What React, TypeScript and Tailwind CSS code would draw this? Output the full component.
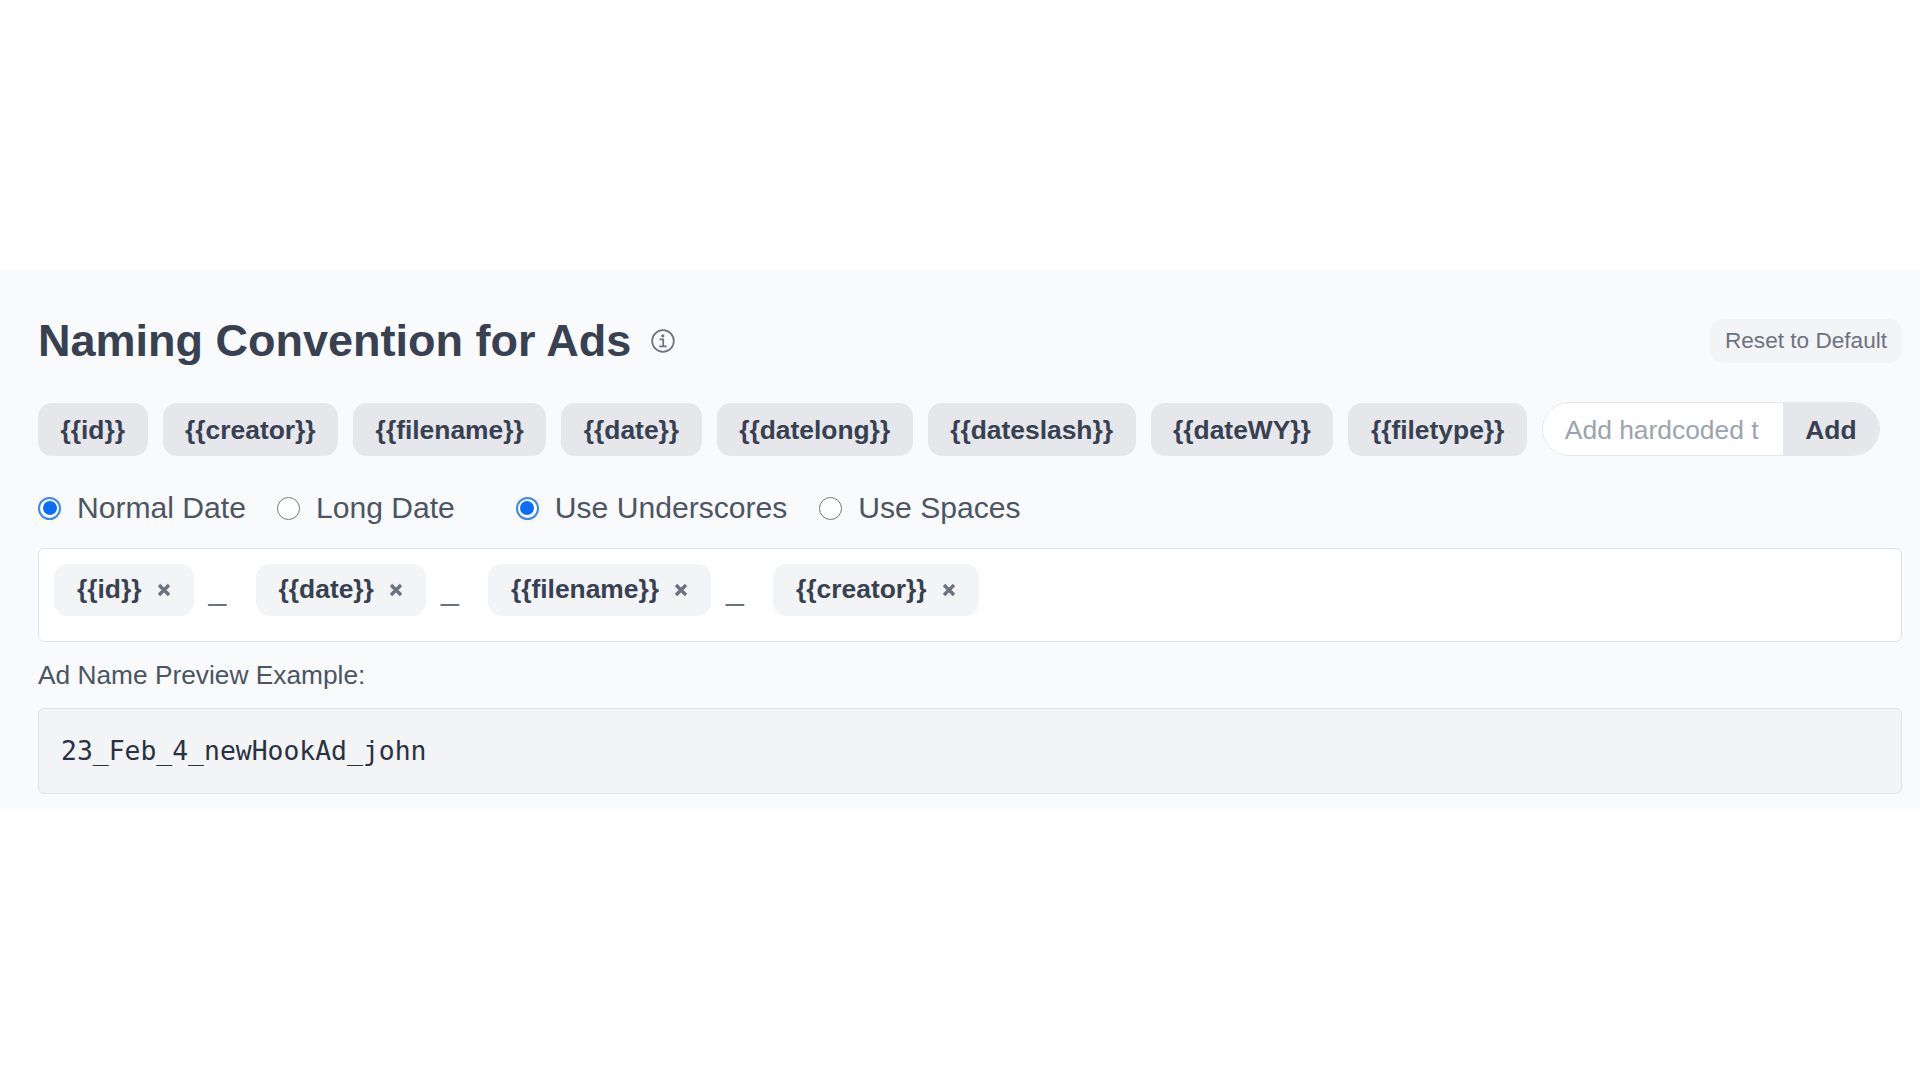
import React from "react";

const SANS = "font-['Liberation_Sans',Arial,sans-serif]";
const pills = ["{{id}}", "{{creator}}", "{{filename}}", "{{date}}", "{{datelong}}", "{{dateslash}}", "{{dateWY}}", "{{filetype}}"];
const chips = ["{{id}}", "{{date}}", "{{filename}}", "{{creator}}"];

function Radio({ label, checked, className = "" }: { label: string; checked?: boolean; className?: string }) {
  return (
    <label className={`flex items-center gap-[16px] ${className}`}>
      {checked ? (
        <span className="flex h-[23px] w-[23px] items-center justify-center rounded-full border-[2px] border-[#3b86f0] bg-white">
          <span className="h-[14px] w-[14px] rounded-full bg-[#0b6ef9]" />
        </span>
      ) : (
        <span className="h-[23px] w-[23px] rounded-full border-[1.5px] border-[#767676] bg-white" />
      )}
      <span>{label}</span>
    </label>
  );
}

function Info() {
  return (
    <svg width="26" height="26" viewBox="0 0 24 24" fill="none" stroke="#6b7280" strokeWidth="1.6" strokeLinecap="butt" strokeLinejoin="miter">
      <circle cx="12" cy="12" r="10" />
      <path d="M8.8 10.6h3.4v6.2M8.6 17h6.8" />
      <circle cx="11.8" cy="7.2" r="0.7" fill="#6b7280" />
    </svg>
  );
}

function X() {
  return (
    <svg width="16" height="16" viewBox="0 0 16 16" fill="none" stroke="#6b7280" strokeWidth="3.4" strokeLinecap="butt">
      <path d="M3 3l10 10M13 3L3 13" />
    </svg>
  );
}

export default function App() {
  return (
    <div className={`min-h-[1080px] bg-white pt-[270px] ${SANS}`}>
      <div className="h-[539px] bg-[#f9fafb] pl-[38px] pr-[18px]">
        <div className="flex h-[132px] items-center justify-between pt-[9px]">
          <div className="flex items-center gap-[19px]">
            <h1 className="text-[45px] leading-none font-bold text-[#374151]">Naming Convention for Ads</h1>
            <Info />
          </div>
          <button className="h-[44px] w-[192px] rounded-[14px] bg-[#f3f4f6] text-[22.6px] text-[#6b7280]">Reset to Default</button>
        </div>

        <div className="flex items-center gap-[15px]">
          {pills.map((p) => (
            <div key={p} className="flex h-[53px] items-center rounded-[14px] bg-[#e5e7eb] px-[22.5px] pt-[3px] text-[26.4px] font-bold text-[#374151]">
              {p}
            </div>
          ))}
          <div className="flex h-[54px] w-[338px] overflow-hidden rounded-full border border-[#e5e7eb]">
            <div className="flex w-[240px] items-center overflow-hidden whitespace-nowrap bg-white pl-[22px] pt-[3px] text-[26.4px] text-[#9ca3af]">Add hardcoded t</div>
            <div className="flex flex-1 items-center justify-center bg-[#e5e7eb] pt-[3px] text-[26.4px] font-bold text-[#374151]">Add</div>
          </div>
        </div>

        <div className="mt-[38px] flex h-[28px] items-center text-[30.1px] text-[#4b5563]">
          <Radio label="Normal Date" checked />
          <Radio label="Long Date" className="ml-[31px]" />
          <Radio label="Use Underscores" checked className="ml-[61px]" />
          <Radio label="Use Spaces" className="ml-[32px]" />
        </div>

        <div className="mt-[26px] flex h-[94px] items-start rounded-[6px] border border-[#e0e3e8] bg-white pl-[15px] pt-[15px]">
          {chips.map((c, i) => (
            <React.Fragment key={c}>
              {i > 0 && <span className="ml-[15px] mr-[29px] w-[18px] pt-[7px] text-[32px] leading-[36px] text-[#6b7280]">_</span>}
              <div className="flex h-[52px] items-center gap-[14px] rounded-[14px] bg-[#f3f4f6] pl-[23px] pr-[22px] text-[26.4px] font-bold text-[#374151]">
                {c}
                <X />
              </div>
            </React.Fragment>
          ))}
        </div>

        <div className="mt-[18px] h-[30px] text-[26.3px] leading-[30px] text-[#4b5563]">Ad Name Preview Example:</div>
        <div className="mt-[18px] flex h-[86px] items-center rounded-[6px] border border-[#dfe2e6] bg-[#f3f4f6] pl-[22px] font-['DejaVu_Sans_Mono',monospace] text-[26.4px] text-[#283242]">
          23_Feb_4_newHookAd_john
        </div>
      </div>
    </div>
  );
}
